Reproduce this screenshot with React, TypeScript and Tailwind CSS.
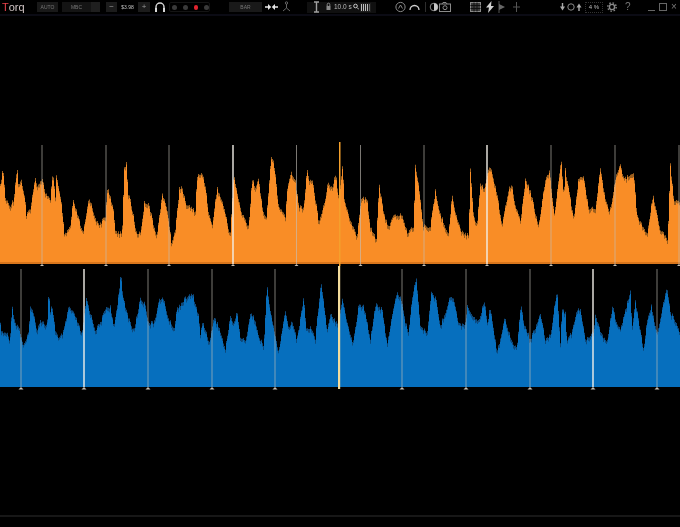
import React from 'react';

type Pt = [number, number];

// envelope points read off the reference: [x, y] in page pixels
const fromZoom = (x0: number, y0: number, pts: number[][]): Pt[] =>
  pts.map(([x, y]) => [x0 + x / 3, y0 + y / 3]);

const orangeEnvelope: Pt[] = [
  ...fromZoom(0, 135, [[0,150],[5,110],[10,110],[14,185],[28,210],[40,190],[50,90],[55,155],[62,125],[75,200],[78,240],[90,215],[105,125],[112,150],[125,125],[135,170],[150,195],[157,105],[165,180],[168,118],[185,215],[192,300],[210,270],[218,195],[230,230],[248,295],[266,182],[280,230],[295,270],[315,240],[322,148],[340,230],[345,285],[365,290],[372,100],[378,80],[383,170],[390,190],[408,290],[420,290],[432,200],[445,200],[460,270],[470,295],[485,175],[500,215],[513,318],[525,280],[537,155],[545,150],[555,200],[565,210],[585,225],[590,120],[600,115],[607,115],[615,150],[625,230],[635,270],[650,155],[670,210],[688,295]]),
  ...fromZoom(230, 135, [[0,285],[10,115],[20,170],[35,235],[55,270],[65,130],[75,150],[85,130],[95,210],[108,250],[122,65],[128,70],[135,115],[145,215],[165,240],[170,165],[182,105],[195,135],[205,210],[220,215],[230,100],[237,130],[247,135],[265,255],[285,190],[292,135],[305,155],[316,110],[325,185],[337,85],[342,190],[355,240],[380,300],[393,185],[410,190],[420,270],[438,310],[446,140],[460,235],[475,270],[490,240],[515,235],[530,290],[550,270],[555,85],[565,145],[578,270],[600,270],[615,165],[630,235],[655,295]]),
  ...fromZoom(450, 135, [[5,170],[15,230],[30,280],[55,300],[60,95],[70,240],[80,265],[90,140],[100,160],[118,85],[130,130],[140,170],[155,268],[175,155],[185,145],[195,210],[210,255],[225,130],[240,165],[265,272],[285,130],[298,105],[312,238],[332,65],[340,180],[345,100],[370,248],[385,125],[400,125],[415,215],[435,215],[450,95],[465,190],[478,228],[498,115],[510,90],[520,130],[550,105],[560,240],[590,295],[608,175],[630,280],[652,310],[660,85],[670,190],[690,200]]),
];

const blueEnvelope: Pt[] = [
  ...fromZoom(0, 262, [[0,185],[5,210],[20,210],[28,235],[35,130],[45,180],[55,190],[70,250],[85,210],[90,125],[100,155],[110,200],[120,170],[140,190],[145,85],[150,150],[155,125],[165,200],[175,230],[190,205],[205,130],[225,160],[245,215],[258,105],[270,150],[285,200],[300,180],[315,135],[330,130],[340,195],[350,130],[362,28],[368,105],[380,150],[400,205],[420,105],[435,125],[445,180],[460,180],[478,105],[490,110],[505,170],[522,195],[530,135],[560,100],[578,95],[595,160],[600,215],[607,175],[628,240],[640,160],[655,190],[675,260]]),
  ...fromZoom(230, 262, [[0,155],[10,185],[20,145],[30,222],[45,235],[60,150],[75,170],[85,225],[100,245],[110,68],[120,145],[135,220],[145,268],[165,140],[175,200],[185,170],[200,230],[220,100],[228,200],[240,190],[255,225],[272,50],[278,100],[290,200],[300,150],[320,180],[337,105],[350,180],[368,240],[385,125],[400,130],[420,225],[436,120],[455,140],[470,240],[490,135],[500,85],[515,115],[525,180],[535,205],[547,90],[558,42],[570,190],[590,210],[602,90],[618,110],[630,190]]),
  ...fromZoom(450, 262, [[0,100],[10,105],[25,185],[45,180],[50,130],[70,160],[85,175],[103,110],[112,190],[118,125],[135,230],[140,265],[155,205],[163,165],[185,235],[200,255],[212,118],[220,180],[240,230],[270,155],[285,230],[300,215],[320,80],[330,235],[335,140],[345,150],[350,235],[365,205],[380,140],[390,140],[405,230],[430,205],[435,150],[450,205],[470,240],[487,120],[495,170],[510,205],[540,80],[545,190],[555,115],[580,262],[590,170],[603,130],[620,210],[650,70],[660,150],[670,160],[690,215]]),
];

function sample(env: Pt[], x: number): number {
  for (let i = 1; i < env.length; i++) {
    if (x <= env[i][0]) {
      const [x0, y0] = env[i - 1];
      const [x1, y1] = env[i];
      return y0 + ((y1 - y0) * (x - x0)) / Math.max(x1 - x0, 0.01);
    }
  }
  return env[env.length - 1][1];
}

// small repeatable jaggies so the edge reads like audio, not a line chart
const jag = (x: number) => {
  const s = Math.sin(x * 12.9898) * 43758.5453;
  return s - Math.floor(s);
};

function wavePoints(env: Pt[], top: number, base: number, lift: number, inset: number): string {
  const out: string[] = [`0,${base - top}`];
  for (let x = 0; x <= 680; x += 1) {
    const y = sample(env, x) - lift + jag(x) * inset;
    const py = Math.min(y, base) - top;
    // stepped columns, one pixel wide
    out.push(`${x},${py}`, `${x + 1},${py}`);
  }
  out.push(`681,${base - top}`);
  return out.join(' ');
}

function Wave(props: {
  top: number;
  base: number;
  env: Pt[];
  fill: string;
  edge: string;
  stripe: string;
  lineTop: number;
  lines: { x: number; strong: boolean }[];
  playX: number;
  playColor: string;
  playW: number;
}) {
  const { top, base, env, fill, edge, stripe, lineTop, lines, playX, playColor, playW } = props;
  return (
    <svg width={680} height={125} viewBox="0 0 680 125" className="block shrink-0 blur-[0.4px]">
      <polygon points={wavePoints(env, top, base, 1, 4)} fill={edge} />
      <polygon points={wavePoints(env, top, base, -1, 6)} fill={fill} />
      {stripe !== 'none' && <rect x={0} y={base - top - 2} width={680} height={2} fill={stripe} />}
      {lines.map((l) => (
        <g key={l.x}>
          <line
            x1={l.x}
            x2={l.x}
            y1={lineTop - top}
            y2={base - top}
            stroke={l.strong ? '#f2efe8' : '#c4c0b8'}
            strokeOpacity={l.strong ? 1 : 0.7}
            strokeWidth={l.strong ? 1.4 : 0.9}
          />
          <polygon
            points={`${l.x - 2.5},${base - top + 2.5} ${l.x + 2.5},${base - top + 2.5} ${l.x},${base - top}`}
            fill="#c8c0b4"
          />
        </g>
      ))}
      <rect x={playX} y={lineTop - top - 3} width={playW} height={base - lineTop + 5} fill={playColor} />
    </svg>
  );
}

const Dot = ({ red }: { red?: boolean }) => (
  <span className={red ? 'h-[5px] w-[5px] rounded-full bg-[#e0242f]' : 'h-[5px] w-[5px] rounded-full bg-[#3a3a3a]'} />
);

const Ico = ({ w, children }: { w: number; children: React.ReactNode }) => (
  <svg width={w} height={12} viewBox={`0 0 ${w} 12`} fill="none" stroke="#8a8a8a" strokeWidth={1} className="block shrink-0">
    {children}
  </svg>
);

function Toolbar() {
  return (
    <div className="flex h-[14px] shrink-0 items-center whitespace-nowrap bg-black font-['Liberation_Sans',sans-serif] text-[5px] leading-none text-[#777] blur-[0.3px]">
      <div className="ml-[2px] flex w-[35px] text-[11px]">
        <span className="text-[#e8414a]">T</span>
        <span className="text-[#d0c4c4]">orq</span>
      </div>
      <div className="flex h-[10px] w-[21px] items-center justify-center bg-[#191919]">AUTO</div>
      <div className="ml-[4px] flex h-[10px] w-[29px] items-center justify-center bg-[#141414]">MBC</div>
      <div className="h-[10px] w-[9px] bg-[#1f1f1f]" />
      <div className="ml-[6px] flex h-[10px] w-[11px] items-center justify-center bg-[#1c1c1c] text-[8px] text-[#999]">−</div>
      <div className="flex h-[10px] w-[21px] items-center justify-center text-[#c4c4c4]">$3.98</div>
      <div className="flex h-[10px] w-[12px] items-center justify-center bg-[#1c1c1c] text-[8px] text-[#999]">+</div>
      <div className="ml-[4px] shrink-0">
        <Ico w={12}>
          <path d="M2 9V6a4 4 0 0 1 8 0v3" stroke="#d8d8d8" strokeWidth={1.4} />
          <rect x={1} y={7} width={2} height={4} fill="#d8d8d8" stroke="none" />
          <rect x={9} y={7} width={2} height={4} fill="#d8d8d8" stroke="none" />
        </Ico>
      </div>
      <div className="ml-[3px] flex h-[10px] w-[41px] items-center gap-[6px] rounded-[2px] border border-[#141414] pl-[2px]">
        <Dot />
        <Dot />
        <Dot red />
        <Dot />
      </div>
      <div className="ml-[19px] flex h-[10px] w-[33px] items-center justify-center bg-[#191919]">BAR</div>
      <div className="ml-[3px] shrink-0">
        <Ico w={13}>
          <path d="M0 6h5M8 6h5" stroke="#e8e8e8" strokeWidth={1.6} />
          <path d="M6.2 6 3 3v6zM6.8 6 10 3v6z" fill="#e8e8e8" stroke="none" />
        </Ico>
      </div>
      <div className="ml-[4px] shrink-0">
        <Ico w={9}>
          <circle cx={4.5} cy={2} r={1.2} stroke="#666" />
          <path d="M4.5 3v4M1 10l3.5-3L8 10" stroke="#666" />
        </Ico>
      </div>
      <div className="ml-[16px] flex h-[11px] w-[69px] items-center bg-[#101010] text-[6.5px] text-[#bbb]">
        <div className="ml-[7px] shrink-0">
          <Ico w={5}>
            <path d="M0 1h5M0 11h5M2.5 1v10" stroke="#a0a0a0" strokeWidth={1.4} />
          </Ico>
        </div>
        <div className="ml-[7px] shrink-0">
          <Ico w={5}>
            <rect x={0.5} y={5} width={4} height={4} fill="#8a8a8a" stroke="none" />
            <path d="M1.2 5V3.5a1.3 1.3 0 0 1 2.6 0V5" />
          </Ico>
        </div>
        <span className="ml-[3px] w-[18px]">10.0 s</span>
        <div className="ml-[1px] shrink-0">
          <Ico w={6}>
            <circle cx={2.5} cy={5} r={1.8} stroke="#c8c8c8" />
            <path d="m4 6.5 2 2" stroke="#c8c8c8" />
          </Ico>
        </div>
        <div className="ml-[1px] flex h-[9px] items-center gap-[1px] bg-[#1e1e1e] px-[1px]">
          <span className="h-[7px] w-[1px] bg-[#bbb]" />
          <span className="h-[7px] w-[1px] bg-[#bbb]" />
          <span className="h-[7px] w-[1px] bg-[#bbb]" />
          <span className="h-[7px] w-[1px] bg-[#bbb]" />
          <span className="h-[7px] w-[1px] bg-[#666]" />
        </div>
      </div>
      <div className="ml-[19px] shrink-0">
        <Ico w={11}>
          <circle cx={5.5} cy={6} r={4.6} />
          <path d="M3.5 7.5 5.5 4l2 3.5" />
        </Ico>
      </div>
      <div className="ml-[3px] shrink-0">
        <Ico w={11}>
          <path d="M1 9a4.5 4.5 0 0 1 9 0" stroke="#cfcfcf" strokeWidth={1.3} />
        </Ico>
      </div>
      <span className="ml-[5px] h-[10px] w-[1px] bg-[#2e2e2e]" />
      <div className="ml-[3px] shrink-0">
        <Ico w={10}>
          <circle cx={5} cy={6} r={3.8} />
          <path d="M5 2.2a3.8 3.8 0 0 1 0 7.6z" fill="#c8c8c8" stroke="none" />
        </Ico>
      </div>
      <div className="shrink-0">
        <Ico w={12}>
          <rect x={0.5} y={3} width={11} height={7.5} />
          <circle cx={6} cy={6.7} r={2} />
          <path d="M3 3l1-1.5h3L8 3" />
        </Ico>
      </div>
      <div className="ml-[19px] shrink-0">
        <Ico w={11}>
          <rect x={0.5} y={1.5} width={10} height={9} fill="#3a3a3a" />
          <path d="M0.5 4.5h10M0.5 7.5h10M4 1.5v9M7 1.5v9" stroke="#111" />
        </Ico>
      </div>
      <div className="ml-[4px] shrink-0">
        <Ico w={10}>
          <path d="M6.5 0 1 6.5h3L3 12l6-7H6z" fill="#d0d0d0" stroke="none" />
        </Ico>
      </div>
      <div className="ml-[3px] shrink-0">
        <Ico w={8}>
          <path d="M1 0v12" stroke="#555" />
          <path d="M1 3l6 3-6 3z" fill="#666" stroke="none" />
        </Ico>
      </div>
      <div className="ml-[6px] shrink-0">
        <Ico w={9}>
          <path d="M4.5 1v10M1 6h7" stroke="#555" />
        </Ico>
      </div>
      <div className="ml-[38px] shrink-0">
        <Ico w={7}>
          <path d="M3.5 2v4" stroke="#aaa" strokeWidth={1.4} />
          <path d="M1 5.5h5L3.5 9.5z" fill="#aaa" stroke="none" />
        </Ico>
      </div>
      <div className="ml-[1px] shrink-0">
        <Ico w={8}>
          <circle cx={4} cy={6} r={3.2} />
        </Ico>
      </div>
      <div className="ml-[1px] shrink-0">
        <Ico w={6}>
          <path d="M3 10V6" stroke="#aaa" strokeWidth={1.4} />
          <path d="M0.5 6.5h5L3 2.5z" fill="#aaa" stroke="none" />
        </Ico>
      </div>
      <div className="ml-[3px] flex h-[11px] w-[18px] items-center justify-center border border-dotted border-[#333] text-[6px] text-[#bbb]">
        4 %
      </div>
      <div className="ml-[4px] shrink-0">
        <Ico w={10}>
          <circle cx={5} cy={6} r={2.6} strokeWidth={1.4} />
          <circle cx={5} cy={6} r={4.2} strokeDasharray="1.5 1.8" strokeWidth={1.4} />
        </Ico>
      </div>
      <span className="ml-[8px] w-[7px] text-[10px] text-[#777]">?</span>
      <span className="ml-[16px] mt-[6px] h-[1px] w-[7px] bg-[#666]" />
      <span className="ml-[4px] h-[8px] w-[8px] border border-[#666]" />
      <span className="ml-[4px] w-[8px] text-[10px] text-[#777]">×</span>
    </div>
  );
}

const orangeLines = [42, 106, 169, 233, 296.5, 360.5, 424, 487, 551, 615, 679].map((x) => ({
  x,
  strong: x === 233 || x === 487,
}));
const blueLines = [21, 84, 148, 212, 275, 402, 466, 530, 593, 657].map((x) => ({
  x,
  strong: x === 84 || x === 593,
}));

export default function App() {
  return (
    <div className="flex h-[527px] w-[680px] flex-col overflow-hidden bg-black">
      <Toolbar />
      <div className="h-[2px] shrink-0 bg-[#0b0b14]" />
      <main className="flex flex-1 flex-col pt-[125px]">
        <Wave
          top={141}
          base={264}
          env={orangeEnvelope}
          fill="#f98d26"
          edge="#9c5f1e"
          stripe="#d9761c"
          lineTop={145}
          lines={orangeLines}
          playX={339}
          playColor="#f4a02c"
          playW={1.5}
        />
        <Wave
          top={266}
          base={387}
          env={blueEnvelope}
          fill="#066fbe"
          edge="#0c4a7e"
          stripe="none"
          lineTop={269}
          lines={blueLines}
          playX={338}
          playColor="#f3dc9c"
          playW={2.2}
        />
      </main>
      <div className="mb-[10px] h-[2px] shrink-0 bg-[#171717]" />
    </div>
  );
}
